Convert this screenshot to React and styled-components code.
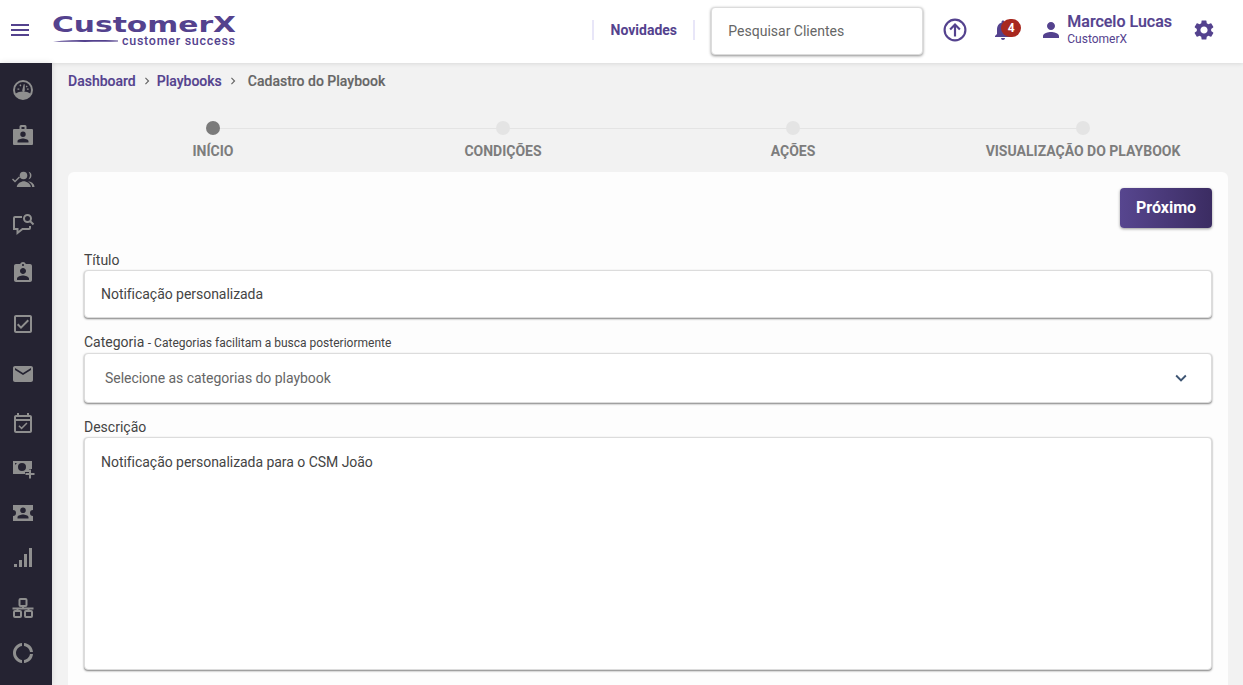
import React from "react";
import styled, { createGlobalStyle } from "styled-components";
import {
  MdMenu, MdNotifications, MdPerson, MdSettings, MdAssignmentInd,
  MdOutlineCheckBox, MdEmail, MdOutlineEventAvailable, MdDonutLarge,
  MdKeyboardArrowDown, MdChevronRight
} from "react-icons/md";

const Global = createGlobalStyle`
  html, body { margin: 0; padding: 0; height: 685px; overflow: hidden; background: #f2f2f2; }
  body { font-family: Roboto, "Liberation Sans", sans-serif; }
  * { box-sizing: border-box; }
`;
const Page = styled.div`display:flex;flex-direction:column;width:1243px;height:685px;overflow:hidden;`;
const TopBar = styled.header`
  height:63px;flex:none;background:#fff;display:flex;align-items:center;
  box-shadow:0 1px 4px rgba(0,0,0,.1);position:relative;z-index:2;
`;
const MenuButton = styled.div`width:40px;display:flex;justify-content:center;color:#54428e;font-size:24px;margin-top:-3px;svg{display:block;}`;
const Logo = styled.svg`width:186px;height:34px;display:block;margin-left:12px;align-self:flex-start;margin-top:13px;`;
const TopRight = styled.div`margin-left:auto;display:flex;align-items:center;height:100%;padding-bottom:3px;`;
const News = styled.div`
  margin-right:16px;width:103px;height:20px;display:flex;align-items:center;justify-content:center;
  border-left:2px solid #e8e6f8;border-right:2px solid #e8e6f8;
  font-size:14px;font-weight:700;color:#54428e;
`;
const Search = styled.div`
  width:212px;height:48px;background:#fff;border-radius:4px;border:1px solid #dcdcdc;
  box-shadow:0 1px 3px rgba(0,0,0,.45);display:flex;align-items:center;padding-left:16px;
  font-size:14px;color:#666;margin-top:2px;
`;
const TopIcon = styled.div`display:flex;color:#54428e;font-size:${p=>p.$size||24}px;margin-left:${p=>p.$ml||0}px;margin-right:${p=>p.$mr||0}px;position:relative;svg{display:block;}`;
const Badge = styled.span`
  position:absolute;top:1px;left:10px;width:20px;height:18px;border-radius:9px;background:#a8281f;
  color:#fff;font-size:12px;font-weight:700;display:flex;align-items:center;justify-content:center;
`;
const User = styled.div`display:flex;flex-direction:column;margin-left:4px;margin-top:-2px;color:#54428e;`;
const UserName = styled.div`font-size:16px;font-weight:500;line-height:19px;-webkit-text-stroke:.2px #54428e;`;
const UserOrg = styled.div`font-size:12px;line-height:14px;margin-top:1px;`;
const Body = styled.div`display:flex;flex:1;min-height:0;`;
const Side = styled.nav`width:52px;flex:none;background:#252332;display:flex;flex-direction:column;align-items:center;padding:15px 6px 0 0;position:relative;z-index:3;box-shadow:0 0 6px rgba(0,0,0,.12);`;
const SideItem = styled.div`height:24px;margin-top:${p=>p.$gap}px;flex:none;display:flex;align-items:center;justify-content:center;color:#8f8f8f;svg{display:block;width:24px;height:24px;}`;
const Main = styled.main`flex:1;min-width:0;padding:0 15px 0 16px;`;
const Crumbs = styled.div`height:36px;display:flex;align-items:center;font-size:14px;font-weight:500;color:#54428e;`;
const Crumb = styled.span`color:${p=>p.$cur?"#666":"#54428e"};-webkit-text-stroke:.15px currentColor;`;
const Sep = styled.span`display:flex;color:#666;font-size:14px;margin:0 ${p=>p.$r}px 0 4px;`;
const Stepper = styled.div`display:grid;grid-template-columns:repeat(4,1fr);height:73px;padding-top:22px;`;
const Step = styled.div`position:relative;display:flex;flex-direction:column;align-items:center;`;
const Line = styled.div`position:absolute;top:6.5px;left:50%;width:100%;height:1px;background:#e4e4e4;`;
const Dot = styled.div`width:14px;height:14px;border-radius:50%;background:${p=>p.$on?"#7b7b7b":"#e4e4e4"};position:relative;z-index:1;`;
const StepLabel = styled.div`margin-top:8px;font-size:14px;font-weight:700;color:#7d7d7d;line-height:17px;white-space:nowrap;`;
const Card = styled.section`background:#fdfdfd;border-radius:6px 6px 0 0;padding:16px;height:600px;display:flex;flex-direction:column;`;
const Actions = styled.div`display:flex;justify-content:flex-end;`;
const NextButton = styled.button`
  width:92px;height:40px;border:0;border-radius:4px;color:#fff;font:700 16px Roboto,sans-serif;padding:0 0 2px;
  background:linear-gradient(90deg,#57468f,#3b2c62);box-shadow:0 1px 3px rgba(0,0,0,.4);
`;
const Label = styled.div`font-size:14px;line-height:16px;color:#444;margin-top:${p=>p.$mt}px;margin-bottom:2px;`;
const Hint = styled.span`font-size:12px;`;
const Field = styled.div`
  height:${p=>p.$h}px;background:#fff;border:1px solid #dcdcdc;border-radius:4px;flex:none;
  box-shadow:0 1px 2px rgba(0,0,0,.5);padding:${p=>p.$pad||"0 16px"};letter-spacing:-.04px;
  display:flex;align-items:${p=>p.$top?"flex-start":"center"};font-size:14px;color:${p=>p.$muted?"#666":"#444"};
`;
const Chevron = styled.span`margin-left:auto;display:flex;color:#3e5573;font-size:22px;margin-right:-1px;`;

const svgProps = { viewBox: "0 0 24 24", fill: "currentColor" };
const UploadIcon = () => (
  <svg width="26" height="26" viewBox="0 0 24 24" fill="none" stroke="currentColor" strokeWidth="2">
    <circle cx="12" cy="12" r="9.600" />
    <path d="M12 18V7M7.500 11.500L12 7l4.500 4.500" />
  </svg>
);
const GaugeIcon = () => (
  <svg {...svgProps}>
    <path fillRule="evenodd" d="M12 2a10 10 0 1 0 0 20a10 10 0 0 0 0-20zM4 12a8 8 0 0 1 16 0c0 1.200-.3 2.400-.8 3.400C17.700 14.500 15 13.600 12 13.600s-5.700.9-7.200 1.800A8 8 0 0 1 4 12z" />
    <path d="M11.200 12.600l1.500-6.300h1l.1 6.300a1.300 1.300 0 0 1-2.600 0zM6.500 10.500h1.800v1.300H6.500zM8.400 7l1.200-.7.800 1.400-1.200.7zM15.900 10.500h1.800v1.300h-1.800zM15.700 7.400l1 1-1 1-1-1z" />
  </svg>
);
const CaseIcon = () => (
  <svg {...svgProps}>
    <path fillRule="evenodd" d="M8.500 6V3.500A1.500 1.500 0 0 1 10 2h4a1.500 1.500 0 0 1 1.500 1.500V6H21a1 1 0 0 1 1 1v14a1 1 0 0 1-1 1H3a1 1 0 0 1-1-1V7a1 1 0 0 1 1-1zM10.500 6h3V4h-3zM12 8.500a2.700 2.700 0 1 0 0 5.400a2.700 2.700 0 0 0 0-5.400zM6.500 19.500h11v-1.300c0-1.800-3.700-2.700-5.500-2.700s-5.500.9-5.500 2.700z" />
  </svg>
);
const TeamCheckIcon = () => (
  <svg {...svgProps}>
    <circle cx="12.500" cy="7.500" r="3.800" />
    <path d="M17.500 3.800a3.800 3.800 0 0 1 0 7.400a6 6 0 0 0 0-7.400zM5.800 19c0-3.600 4.500-5.800 7-5.800s7 2.200 7 5.800zM17 13.300c2.800.4 6.500 2 6.500 5.700h-2.300c0-2.400-2-4.300-4.200-5.700zM1 11.600l1-1 2 2 4-4 1 1-5 5z" />
  </svg>
);
const ChatSearchIcon = () => (
  <svg {...svgProps} fill="none" stroke="currentColor" strokeWidth="2">
    <path d="M11 4H4a1 1 0 0 0-1 1v11h3.500v4l5-4H18a1 1 0 0 0 1-1v-2" />
    <circle cx="16.500" cy="5.500" r="3.500" />
    <path d="M19 8l3.500 3.500" />
  </svg>
);
const MoneyPlusIcon = () => (
  <svg {...svgProps}>
    <path fillRule="evenodd" d="M2 5h19v8h-3v3h-4v2H2zM11 7a4 4 0 1 0 0 8a4 4 0 0 0 0-8zM4 7h2L4 9z" />
    <path d="M18 13.500h2v3.500h3.500v2H20v3.500h-2V19h-3.500v-2H18z" />
  </svg>
);
const TicketIcon = () => (
  <svg {...svgProps}>
    <path fillRule="evenodd" d="M2 4h20v5a3 3 0 0 0 0 6v5H2v-5a3 3 0 0 0 0-6zM12 6.500a2.800 2.800 0 1 0 0 5.600a2.800 2.800 0 0 0 0-5.600zM6.500 17.500h11v-1.300c0-1.800-3.700-2.700-5.500-2.700s-5.500.9-5.500 2.700z" />
  </svg>
);
const BarsIcon = () => (
  <svg {...svgProps}>
    <path d="M3 18h3v3H3zM8 14h3v7H8zM13 8h3v13h-3zM18 2h3v19h-3z" />
  </svg>
);
const NetworkIcon = () => (
  <svg {...svgProps} fill="none" stroke="currentColor" strokeWidth="2">
    <rect x="8.500" y="3" width="7" height="7" rx="1" />
    <rect x="3" y="15" width="7" height="6" rx="1" />
    <rect x="14" y="15" width="7" height="6" rx="1" />
    <path d="M12 10v2.500M1.500 12.500h21M6.500 12.500V15M17.500 12.500V15" />
  </svg>
);

const sideItems = [
  [GaugeIcon, 0], [CaseIcon, 21], [TeamCheckIcon, 21], [ChatSearchIcon, 21], [MdAssignmentInd, 24],
  [MdOutlineCheckBox, 27], [MdEmail, 26], [MdOutlineEventAvailable, 26], [MoneyPlusIcon, 20],
  [TicketIcon, 21], [BarsIcon, 21], [NetworkIcon, 26], [MdDonutLarge, 21],
];
const steps = ["INÍCIO", "CONDIÇÕES", "AÇÕES", "VISUALIZAÇÃO DO PLAYBOOK"];

export default function App() {
  return (
    <Page>
      <Global />
      <TopBar>
        <MenuButton><MdMenu /></MenuButton>
        <Logo viewBox="0 0 186 34" aria-label="CustomerX">
          <text x="0" y="19" fontFamily="'DejaVu Sans',sans-serif" fontSize="20.500" fontWeight="700" fill="#54428e" textLength="184" lengthAdjust="spacingAndGlyphs">CustomerX</text>
          <path d="M1 28.500C20 26.800 45 26.800 66 27.500V28.500C45 29 20 29 1 28.500z" fill="#54428e" />
          <text x="70" y="32" fontFamily="Roboto,sans-serif" fontSize="12.500" fontWeight="500" fill="#54428e" textLength="113" lengthAdjust="spacing">customer success</text>
        </Logo>
        <TopRight>
          <News>Novidades</News>
          <Search>Pesquisar Clientes</Search>
          <TopIcon $ml={19}><UploadIcon /></TopIcon>
          <TopIcon $ml={23}><MdNotifications /><Badge>4</Badge></TopIcon>
          <TopIcon $ml={24}><MdPerson /></TopIcon>
          <User><UserName>Marcelo Lucas</UserName><UserOrg>CustomerX</UserOrg></User>
          <TopIcon $ml={20} $mr={27}><MdSettings /></TopIcon>
        </TopRight>
      </TopBar>
      <Body>
        <Side>
          {sideItems.map(([Icon, gap], i) => <SideItem key={i} $gap={gap}><Icon /></SideItem>)}
        </Side>
        <Main>
          <Crumbs>
            <Crumb>Dashboard</Crumb><Sep $r={3}><MdChevronRight /></Sep>
            <Crumb>Playbooks</Crumb><Sep $r={8}><MdChevronRight /></Sep>
            <Crumb $cur>Cadastro do Playbook</Crumb>
          </Crumbs>
          <Stepper>
            {steps.map((s, i) => (
              <Step key={s}>
                {i < 3 && <Line />}
                <Dot $on={i === 0} />
                <StepLabel>{s}</StepLabel>
              </Step>
            ))}
          </Stepper>
          <Card>
            <Actions><NextButton>Próximo</NextButton></Actions>
            <Label $mt={24}>Título</Label>
            <Field $h={48}>Notificação personalizada</Field>
            <Label $mt={16}>Categoria <Hint>- Categorias facilitam a busca posteriormente</Hint></Label>
            <Field $h={50} $muted $pad="0 20px">Selecione as categorias do playbook<Chevron><MdKeyboardArrowDown /></Chevron></Field>
            <Label $mt={16}>Descrição</Label>
            <Field $h={233} $top $pad="16px">Notificação personalizada para o CSM João</Field>
          </Card>
        </Main>
      </Body>
    </Page>
  );
}
